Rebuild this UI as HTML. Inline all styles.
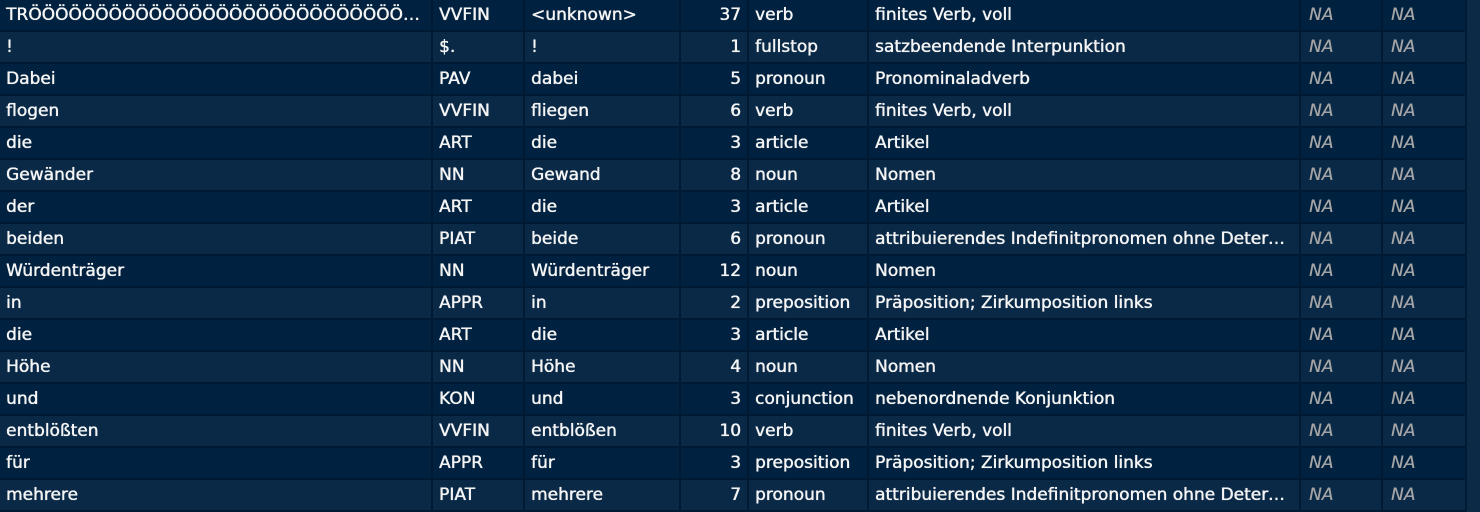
<!DOCTYPE html><html><head><meta charset="utf-8"><style>
body{margin:0;width:1480px;height:512px;background:#0c2a45;overflow:hidden;font-family:"DejaVu Sans","Liberation Sans",sans-serif;font-size:17px;color:#f4f4f4}
table{border-collapse:collapse;table-layout:fixed;width:1466px}
td{height:30px;padding:0 6px;border-right:2px solid #001a33;border-bottom:2px solid #001a33;white-space:nowrap;overflow:hidden;text-overflow:ellipsis;line-height:30px;letter-spacing:0;text-shadow:0 0 0.6px #fff,0.3px 0 0 #fff}
tr:nth-child(odd) td{background:#00213f}
tr:nth-child(even) td{background:#0a2947}
td.n{text-align:right}
td.na{color:#a4a4a4;font-style:italic;padding-left:8px;text-shadow:0.3px 0 0 #a4a4a4}
</style></head><body><table>
<colgroup><col style="width:432px"><col style="width:92px"><col style="width:156px"><col style="width:68px"><col style="width:120px"><col style="width:432px"><col style="width:82px"><col style="width:84px"></colgroup>
<tr><td>TRÖÖÖÖÖÖÖÖÖÖÖÖÖÖÖÖÖÖÖÖÖÖÖÖÖÖÖÖÖÖÖÖÖÖÖÖ</td><td>VVFIN</td><td>&lt;unknown&gt;</td><td class="n">37</td><td>verb</td><td>finites Verb, voll</td><td class="na">NA</td><td class="na">NA</td></tr>
<tr><td>!</td><td>$.</td><td>!</td><td class="n">1</td><td>fullstop</td><td>satzbeendende Interpunktion</td><td class="na">NA</td><td class="na">NA</td></tr>
<tr><td>Dabei</td><td>PAV</td><td>dabei</td><td class="n">5</td><td>pronoun</td><td>Pronominaladverb</td><td class="na">NA</td><td class="na">NA</td></tr>
<tr><td>flogen</td><td>VVFIN</td><td>fliegen</td><td class="n">6</td><td>verb</td><td>finites Verb, voll</td><td class="na">NA</td><td class="na">NA</td></tr>
<tr><td>die</td><td>ART</td><td>die</td><td class="n">3</td><td>article</td><td>Artikel</td><td class="na">NA</td><td class="na">NA</td></tr>
<tr><td>Gewänder</td><td>NN</td><td>Gewand</td><td class="n">8</td><td>noun</td><td>Nomen</td><td class="na">NA</td><td class="na">NA</td></tr>
<tr><td>der</td><td>ART</td><td>die</td><td class="n">3</td><td>article</td><td>Artikel</td><td class="na">NA</td><td class="na">NA</td></tr>
<tr><td>beiden</td><td>PIAT</td><td>beide</td><td class="n">6</td><td>pronoun</td><td>attribuierendes Indefinitpronomen ohne Determiner</td><td class="na">NA</td><td class="na">NA</td></tr>
<tr><td>Würdenträger</td><td>NN</td><td>Würdenträger</td><td class="n">12</td><td>noun</td><td>Nomen</td><td class="na">NA</td><td class="na">NA</td></tr>
<tr><td>in</td><td>APPR</td><td>in</td><td class="n">2</td><td>preposition</td><td>Präposition; Zirkumposition links</td><td class="na">NA</td><td class="na">NA</td></tr>
<tr><td>die</td><td>ART</td><td>die</td><td class="n">3</td><td>article</td><td>Artikel</td><td class="na">NA</td><td class="na">NA</td></tr>
<tr><td>Höhe</td><td>NN</td><td>Höhe</td><td class="n">4</td><td>noun</td><td>Nomen</td><td class="na">NA</td><td class="na">NA</td></tr>
<tr><td>und</td><td>KON</td><td>und</td><td class="n">3</td><td>conjunction</td><td>nebenordnende Konjunktion</td><td class="na">NA</td><td class="na">NA</td></tr>
<tr><td>entblößten</td><td>VVFIN</td><td>entblößen</td><td class="n">10</td><td>verb</td><td>finites Verb, voll</td><td class="na">NA</td><td class="na">NA</td></tr>
<tr><td>für</td><td>APPR</td><td>für</td><td class="n">3</td><td>preposition</td><td>Präposition; Zirkumposition links</td><td class="na">NA</td><td class="na">NA</td></tr>
<tr><td>mehrere</td><td>PIAT</td><td>mehrere</td><td class="n">7</td><td>pronoun</td><td>attribuierendes Indefinitpronomen ohne Determiner</td><td class="na">NA</td><td class="na">NA</td></tr>
</table></body></html>
